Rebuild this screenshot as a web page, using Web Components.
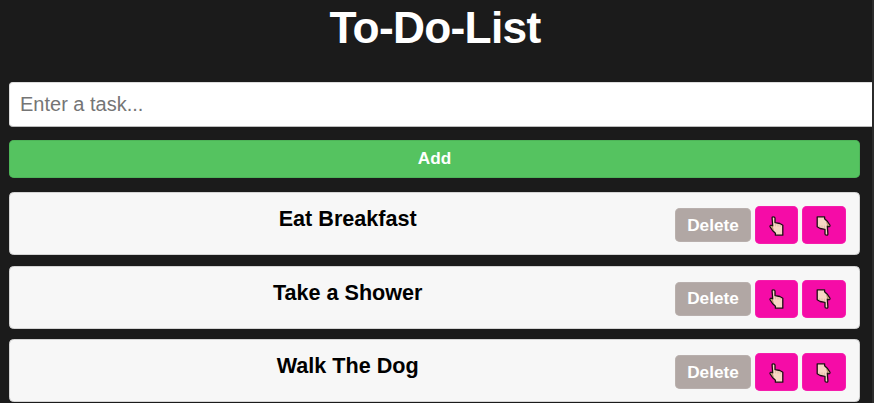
<!DOCTYPE html>
<html lang="en">
<head>
<meta charset="utf-8">
<title>To-Do-List</title>
<style>
html,body{margin:0;height:403px;overflow:hidden;background:#1b1b1b;font-family:"Liberation Sans",Arial,sans-serif}
</style>
</head>
<body>
<todo-app></todo-app>
<script>
class HandIcon extends HTMLElement{
  connectedCallback(){
    this.attachShadow({mode:'open'}).innerHTML=`
    <style>:host{display:block;width:15px;height:20px}:host([down]) svg{transform:rotate(180deg)}svg{display:block}</style>
    <svg width="15" height="20" viewBox="0 0 15 20">
      <path d="M3.1 2Q3.1 .8 4.5 .8Q5.9 .8 6 2V6.6L10.8 7.5L13.8 9.3V19.2H6.4V17.2L3.8 14.8L1 10.6Q.9 9.2 2.2 9.2L3.7 10Z" fill="#f7d7c4" stroke="#1c0d12" stroke-width="1.3" stroke-linejoin="round"/>
      <path d="M1.8 10.1L3.5 10.8L4.6 13.8L3.6 13.1Z" fill="#b98b62" stroke="#b98b62" stroke-width=".4"/>
      <path d="M6.6 7.6V10.3M9 8.2V10.6M11.3 8.8V10.8" stroke="#d5ab91" stroke-width=".6"/>
    </svg>`;
  }
}
class TodoButton extends HTMLElement{
  connectedCallback(){
    this.attachShadow({mode:'open'}).innerHTML=`
    <style>
    :host{display:block}
    button{display:flex;align-items:center;justify-content:center;box-sizing:border-box;width:100%;height:100%;margin:0;padding:0;border:0;border-radius:5px;
      background:var(--fill);color:#fff;font:bold 17.2px "Liberation Sans",Arial,sans-serif;box-shadow:inset 0 0 0 .5px var(--edge)}
    </style><button><slot></slot></button>`;
  }
}
class TodoItem extends HTMLElement{
  connectedCallback(){
    this.attachShadow({mode:'open'}).innerHTML=`
    <style>
    :host{display:flex;box-sizing:border-box;height:63px;margin-bottom:10.5px;padding:13px 13.4px 0 14.6px;background:#f7f7f7;border:1.5px solid #d4d4d4;border-radius:4.5px}
    .label{flex:1;text-align:center;font-weight:bold;font-size:21.6px;line-height:25px;color:#000}
    .actions{display:flex;align-items:center;gap:3.6px;height:38px;margin-left:4px}
    .delete{width:76.2px;height:34px;--fill:#b1a7a4;--edge:#c0b8b5}
    .move{width:43.7px;height:38px;--fill:#f50ca7;--edge:#f62fb2}
    hand-icon{margin-top:1px}
    </style>
    <div class="label"><slot></slot></div>
    <div class="actions"><todo-button class="delete">Delete</todo-button><todo-button class="move"><hand-icon></hand-icon></todo-button><todo-button class="move"><hand-icon down></hand-icon></todo-button></div>`;
  }
}
class TodoApp extends HTMLElement{
  connectedCallback(){
    this.attachShadow({mode:'open'}).innerHTML=`
    <style>
    :host{display:block;box-sizing:border-box;height:403px;padding:0 14px 0 9px;border-right:2px solid #2b2b2b;overflow:hidden}
    h1{margin:0 0 29px;padding-left:3px;height:53px;line-height:56px;font-size:44.3px;letter-spacing:-.72px;color:#fff;text-align:center}
    input{display:block;box-sizing:border-box;width:900px;height:44.7px;margin:0 0 13.3px;padding:0 10px;border:1.5px solid #ddd;border-bottom-color:#bbb;border-radius:4px;background:#fff;font:20px "Liberation Sans",Arial,sans-serif;outline:0}
    input::placeholder{color:#757575;opacity:1}
    .add{width:851px;height:38px;margin-bottom:14.2px;--fill:#55c360;--edge:#46a650}
    todo-item{width:851px}
    </style>
    <h1>To-Do-List</h1>
    <input placeholder="Enter a task...">
    <todo-button class="add">Add</todo-button>
    <todo-item>Eat Breakfast</todo-item>
    <todo-item>Take a Shower</todo-item>
    <todo-item>Walk The Dog</todo-item>`;
  }
}
customElements.define('hand-icon',HandIcon);
customElements.define('todo-button',TodoButton);
customElements.define('todo-item',TodoItem);
customElements.define('todo-app',TodoApp);
</script>
</body>
</html>
